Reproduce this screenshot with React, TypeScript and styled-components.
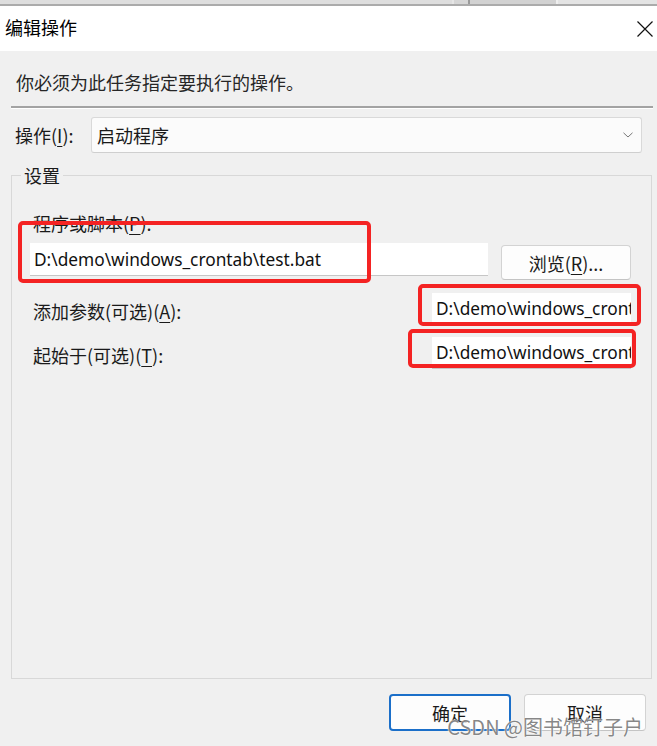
import React from "react";
import styled, { createGlobalStyle } from "styled-components";

const GlobalStyle = createGlobalStyle`
  html, body {
    margin: 0;
    padding: 0;
    background: #f0f0f0;
  }
  body {
    font-family: "Noto Sans", "Noto Sans CJK SC", sans-serif;
    font-size: 18px;
    color: #1a1a1a;
  }
  * { box-sizing: border-box; }
`;

const Window = styled.div`
  width: 657px;
  height: 746px;
  overflow: hidden;
  background: #f0f0f0;
  display: flex;
  flex-direction: column;
`;

const TopStrip = styled.div`
  height: 6px;
  display: flex;
  border-bottom: 2px solid #ababab;
  background: #dcdcdc;
`;

const StripSeg = styled.div<{ $w: number; $bg: string; $edge?: string }>`
  width: ${(p) => p.$w}px;
  flex: ${(p) => (p.$w === 0 ? 1 : "none")};
  background: ${(p) => p.$bg};
  border-left: ${(p) => (p.$edge ? `2px solid ${p.$edge}` : "none")};
`;

const TitleBar = styled.div`
  height: 45px;
  background: #ffffff;
  display: flex;
  align-items: center;
  justify-content: space-between;
  padding: 0 3px 3px 5px;
`;

const Title = styled.div`
  font-family: "Noto Sans CJK SC", sans-serif;
  font-size: 18px;
  line-height: 24px;
  color: #000;
`;

const CloseButton = styled.div`
  width: 18px;
  height: 18px;
  display: flex;
  align-items: center;
  justify-content: center;
  margin-top: 3px;
`;

const Body = styled.div`
  flex: 1;
  display: flex;
  flex-direction: column;
`;

const Instruction = styled.div`
  margin: 19px 0 0 16px;
  line-height: 24px;
  font-family: "Noto Sans CJK SC", sans-serif;
  font-size: 18px;
  color: #262626;
`;

const Separator = styled.div`
  margin: 12px 4px 0 11px;
  border-top: 2px solid #a3a3a3;
  border-bottom: 1px solid #ffffff;
`;

const OpRow = styled.div`
  margin: 8px 15px 0 15px;
  display: flex;
  align-items: center;
  height: 36px;
`;

const Label = styled.span<{ $width?: number }>`
  font-family: "Noto Sans CJK SC", sans-serif;
  font-size: 18px;
  line-height: 24px;
  color: #1a1a1a;
  white-space: nowrap;
  ${(p) => (p.$width ? `width: ${p.$width}px; flex: none;` : "")}
  u {
    text-decoration-thickness: 1px;
    text-underline-offset: 3px;
  }
`;

const Select = styled.div`
  flex: 1;
  height: 36px;
  background: #fbfbfb;
  border: 1px solid #d9d9d9;
  border-bottom-color: #cfcfcf;
  border-radius: 3px;
  display: flex;
  align-items: center;
  justify-content: space-between;
  padding: 0 8px 0 5px;
  font-family: "Noto Sans CJK SC", sans-serif;
  font-size: 18px;
  color: #1a1a1a;
`;

const GroupBox = styled.fieldset`
  margin: 10px 5px 0 11px;
  padding: 0 20px 309px 18px;
  border: 1px solid #d8d8d8;
  min-width: 0;
`;

const Legend = styled.legend`
  margin-left: -9px;
  padding: 0 3px;
  line-height: 24px;
  font-family: "Noto Sans CJK SC", sans-serif;
  font-size: 18px;
  color: #1a1a1a;
`;

const FieldLabel = styled.div`
  margin: 24px 0 0 3px;
  line-height: 24px;
`;

const PathRow = styled.div`
  margin-top: 7px;
  display: flex;
  align-items: flex-start;
  gap: 13px;
`;

const Annotated = styled.div<{ $width?: number }>`
  position: relative;
  ${(p) => (p.$width ? `width: ${p.$width}px; flex: none;` : "flex: 1;")}
`;

const Highlight = styled.div<{ $t: number; $l: number; $r: number; $b: number }>`
  position: absolute;
  top: ${(p) => p.$t}px;
  left: ${(p) => p.$l}px;
  right: ${(p) => p.$r}px;
  bottom: ${(p) => p.$b}px;
  border: 4px solid #f42323;
  border-radius: 5px;
  pointer-events: none;
`;

const TextInput = styled.div<{ $h: number }>`
  height: ${(p) => p.$h}px;
  background: #ffffff;
  border-bottom: 1px solid #c6c6c6;
  display: flex;
  align-items: center;
  padding-left: 4px;
  font-family: "Noto Sans", sans-serif;
  font-size: 17.3px;
  color: #111;
  white-space: nowrap;
  overflow: hidden;
`;

const Button = styled.button<{ $primary?: boolean; $w: number; $h: number }>`
  width: ${(p) => p.$w}px;
  height: ${(p) => p.$h}px;
  flex: none;
  background: #fdfdfd;
  border: ${(p) => (p.$primary ? "2px solid #1b6fc9" : "1px solid #d3d3d3")};
  border-bottom-color: ${(p) => (p.$primary ? "#1b6fc9" : "#c4c4c4")};
  border-radius: 4px;
  font-family: "Noto Sans CJK SC", sans-serif;
  font-size: 18px;
  color: #1a1a1a;
  padding: 0;
  display: flex;
  align-items: center;
  justify-content: center;
  u {
    text-decoration-thickness: 1px;
    text-underline-offset: 3px;
  }
`;

const BrowseButton = styled(Button)`
  margin-top: 2px;
`;

const OptionRow = styled.div<{ $gap: number }>`
  margin-top: ${(p) => p.$gap}px;
  display: flex;
  align-items: center;
  justify-content: space-between;
`;

const OptionLabel = styled(Label)`
  margin-left: 3px;
  padding-top: 3px;
`;

const ButtonRow = styled.div`
  position: relative;
  margin: 15px 11px 0 0;
  display: flex;
  justify-content: flex-end;
  gap: 13px;
`;

const Watermark = styled.div`
  position: absolute;
  right: 3px;
  top: 22px;
  line-height: 22px;
  font-family: "Noto Sans CJK SC", sans-serif;
  font-size: 20px;
  color: rgba(95, 95, 95, 0.75);
  text-shadow: 0 0 1px #ffffff, 0 0 2px #ffffff;
  white-space: nowrap;
  pointer-events: none;
`;

const CloseIcon = () => (
  <svg width="16" height="16" viewBox="0 0 16 16">
    <path d="M0.5 0.5 L15.5 15.5 M15.5 0.5 L0.5 15.5" stroke="#111" strokeWidth="1.2" fill="none" />
  </svg>
);

const Chevron = () => (
  <svg width="10" height="6" viewBox="0 0 10 6">
    <path d="M0.5 0.8 L5 5 L9.5 0.8" stroke="#777" strokeWidth="1" fill="none" />
  </svg>
);

export default function App() {
  const path = "D:\\demo\\windows_crontab\\test.bat";
  return (
    <>
      <GlobalStyle />
      <Window>
        <TopStrip>
          <StripSeg $w={452} $bg="#dedede" />
          <StripSeg $w={16} $bg="#d6d6d6" $edge="#e6e6e6" />
          <StripSeg $w={88} $bg="#d2d2d2" $edge="#9a9a9a" />
          <StripSeg $w={0} $bg="#e4e4e4" $edge="#efefef" />
        </TopStrip>
        <TitleBar>
          <Title>编辑操作</Title>
          <CloseButton>
            <CloseIcon />
          </CloseButton>
        </TitleBar>
        <Body>
          <Instruction>你必须为此任务指定要执行的操作。</Instruction>
          <Separator />
          <OpRow>
            <Label $width={76}>
              操作(<u>I</u>):
            </Label>
            <Select>
              <span>启动程序</span>
              <Chevron />
            </Select>
          </OpRow>
          <GroupBox>
            <Legend>设置</Legend>
            <FieldLabel>
              <Label>
                程序或脚本(<u>P</u>):
              </Label>
            </FieldLabel>
            <PathRow>
              <Annotated>
                <TextInput $h={33}>{path}</TextInput>
                <Highlight $t={-22} $l={-12} $r={117} $b={-7} />
              </Annotated>
              <BrowseButton $w={130} $h={35}>
                浏览(<u>R</u>)...
              </BrowseButton>
            </PathRow>
            <OptionRow $gap={13}>
              <OptionLabel>
                添加参数(可选)(<u>A</u>):
              </OptionLabel>
              <Annotated $width={199}>
                <TextInput $h={32}>D:\demo\windows_crontab</TextInput>
                <Highlight $t={-9} $l={-14} $r={-10} $b={-1} />
              </Annotated>
            </OptionRow>
            <OptionRow $gap={12}>
              <OptionLabel>
                起始于(可选)(<u>T</u>):
              </OptionLabel>
              <Annotated $width={199}>
                <TextInput $h={32}>D:\demo\windows_crontab</TextInput>
                <Highlight $t={-8} $l={-24} $r={-5} $b={1} />
              </Annotated>
            </OptionRow>
          </GroupBox>
          <ButtonRow>
            <Button $primary $w={122} $h={37}>
              确定
            </Button>
            <Button $w={122} $h={37}>
              取消
            </Button>
            <Watermark>CSDN @图书馆钉子户</Watermark>
          </ButtonRow>
        </Body>
      </Window>
    </>
  );
}
